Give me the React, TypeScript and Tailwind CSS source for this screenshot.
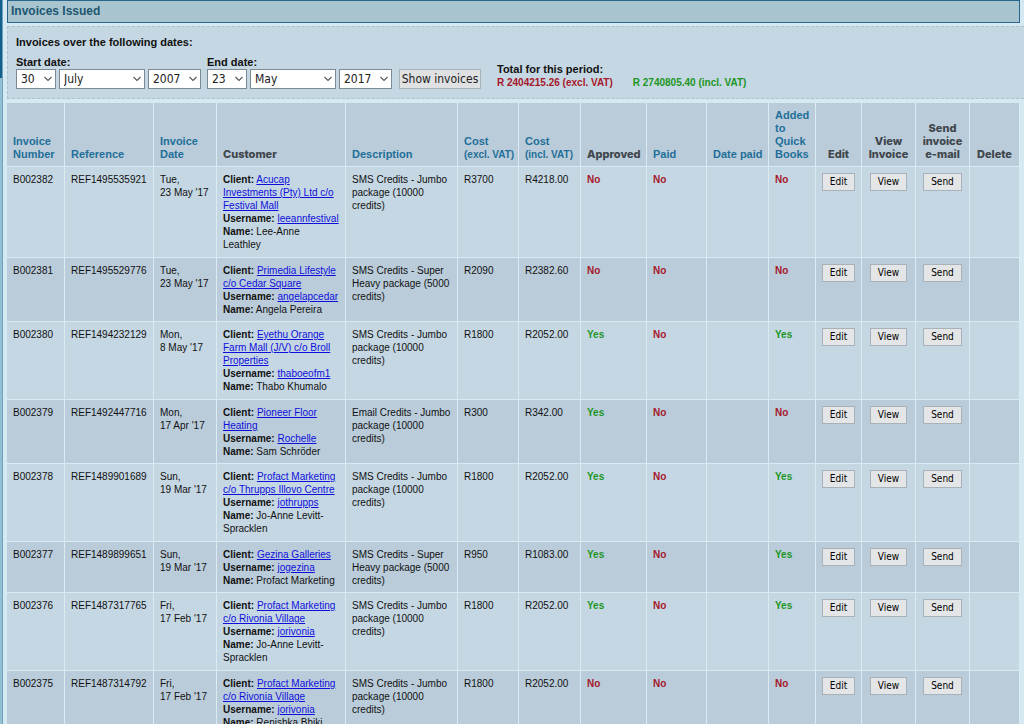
import type { ReactNode } from "react";

type Invoice = {
  number: string;
  reference: string;
  day: string;
  date: string;
  client: string;
  username: string;
  name: string;
  description: string;
  excl: string;
  incl: string;
  approved: boolean;
  paid: boolean;
  quickBooks: boolean;
};

const JUMBO = "SMS Credits - Jumbo package (10000 credits)";
const SUPER = "SMS Credits - Super Heavy package (5000 credits)";

const invoices: Invoice[] = [
  { number: "B002382", reference: "REF1495535921", day: "Tue,", date: "23 May '17", client: "Acucap Investments (Pty) Ltd c/o Festival Mall", username: "leeannfestival", name: "Lee-Anne Leathley", description: JUMBO, excl: "R3700", incl: "R4218.00", approved: false, paid: false, quickBooks: false },
  { number: "B002381", reference: "REF1495529776", day: "Tue,", date: "23 May '17", client: "Primedia Lifestyle c/o Cedar Square", username: "angelapcedar", name: "Angela Pereira", description: SUPER, excl: "R2090", incl: "R2382.60", approved: false, paid: false, quickBooks: false },
  { number: "B002380", reference: "REF1494232129", day: "Mon,", date: "8 May '17", client: "Eyethu Orange Farm Mall (J/V) c/o Broll Properties", username: "thaboeofm1", name: "Thabo Khumalo", description: JUMBO, excl: "R1800", incl: "R2052.00", approved: true, paid: false, quickBooks: true },
  { number: "B002379", reference: "REF1492447716", day: "Mon,", date: "17 Apr '17", client: "Pioneer Floor Heating", username: "Rochelle", name: "Sam Schröder", description: "Email Credits - Jumbo package (10000 credits)", excl: "R300", incl: "R342.00", approved: true, paid: false, quickBooks: false },
  { number: "B002378", reference: "REF1489901689", day: "Sun,", date: "19 Mar '17", client: "Profact Marketing c/o Thrupps Illovo Centre", username: "jothrupps", name: "Jo-Anne Levitt-Spracklen", description: JUMBO, excl: "R1800", incl: "R2052.00", approved: true, paid: false, quickBooks: true },
  { number: "B002377", reference: "REF1489899651", day: "Sun,", date: "19 Mar '17", client: "Gezina Galleries", username: "jogezina", name: "Profact Marketing", description: SUPER, excl: "R950", incl: "R1083.00", approved: true, paid: false, quickBooks: true },
  { number: "B002376", reference: "REF1487317765", day: "Fri,", date: "17 Feb '17", client: "Profact Marketing c/o Rivonia Village", username: "jorivonia", name: "Jo-Anne Levitt-Spracklen", description: JUMBO, excl: "R1800", incl: "R2052.00", approved: true, paid: false, quickBooks: true },
  { number: "B002375", reference: "REF1487314792", day: "Fri,", date: "17 Feb '17", client: "Profact Marketing c/o Rivonia Village", username: "jorivonia", name: "Renishka Bhiki", description: JUMBO, excl: "R1800", incl: "R2052.00", approved: false, paid: false, quickBooks: false },
];

function DateSelect({ label, value, width, id }: { label: string; value: string; width: string; id?: string }) {
  return (
    <span className={`relative block h-5 ${width}`}>
      <select
        id={id}
        aria-label={id ? undefined : label}
        defaultValue={value}
        className="block h-full w-full appearance-none border border-[#7b8a94] bg-white pl-1 font-['DejaVu_Sans_Condensed','DejaVu_Sans',sans-serif] text-[12px] leading-4 text-[#222]"
      >
        <option>{value}</option>
      </select>
      <svg className="pointer-events-none absolute top-1.5 right-1 h-2 w-2" viewBox="0 0 8 8" fill="none" stroke="#555" strokeWidth="1.1">
        <path d="M0.5 2 4 5.5 7.5 2" />
      </svg>
    </span>
  );
}

function SortHead({ children }: { children: ReactNode }) {
  return (
    <th className="border-r border-b border-[#daebf3] px-1.5 pt-1.5 pb-[5px] text-left align-bottom text-[11px] leading-[13px] font-bold text-[#1f6f98]">
      <a href="#sort">{children}</a>
    </th>
  );
}

function PlainHead({ children, center }: { children: ReactNode; center?: boolean }) {
  return (
    <th className={`border-r border-b border-[#daebf3] pt-1.5 pb-[5px] align-bottom font-['Inter','Liberation_Sans',sans-serif] text-[11px] leading-[13px] font-extrabold text-[#40464c] ${center ? "px-0 text-center" : "pl-1.5 text-left"}`}>
      {children}
    </th>
  );
}

function Cell({ children }: { children?: ReactNode }) {
  return <td className="border-r border-b border-[#daebf3] pt-1.5 pr-1.5 pb-[5px] pl-1.5 align-top group-odd:pb-1.5">{children}</td>;
}

function Flag({ on }: { on: boolean }) {
  return <b className={on ? "text-[#1c961f]" : "text-[#a5182c]"}>{on ? "Yes" : "No"}</b>;
}

function ActionCell({ label }: { label: string }) {
  return (
    <td className="border-r border-b border-[#daebf3] pt-1.5 text-center align-top">
      <button type="button" className="h-[18px] border border-[#a9b2b8] bg-[#e4e5e7] px-[7px] font-['DejaVu_Sans_Condensed','DejaVu_Sans',sans-serif] text-[10px] leading-4 text-black">
        {label}
      </button>
    </td>
  );
}

export default function App() {
  return (
    <div className="flex min-h-screen bg-[#d5e9f2] font-['Liberation_Sans',Arial,sans-serif] text-[#111]">
      <div className="flex w-[3px] shrink-0 flex-col border-r border-[#6fa3bd]">
        <div className="h-[78px] bg-[#12608c]" />
        <div className="grow bg-[#93bfd0]" />
      </div>
      <main className="min-w-0 grow pl-1">
        <h1 className="mr-1 border border-[#27658a] bg-[#a8c5cf] pl-[3px] text-[12px] leading-[21px] font-bold text-[#1d566f]">
          Invoices Issued
        </h1>
        <form className="mt-[3px] border border-r-0 border-dashed border-[#adc3cb] bg-[#c5d7e3] pt-[9px] pb-[9px] pl-2 text-[11px] leading-[13px]">
          <p className="font-bold">Invoices over the following dates:</p>
          <div className="mt-[7px] flex items-end">
            <div>
              <label htmlFor="start-day" className="block font-bold">Start date:</label>
              <div className="flex gap-[3px]">
                <DateSelect id="start-day" label="Start day" value="30" width="w-10" />
                <DateSelect label="Start month" value="July" width="w-[86px]" />
                <DateSelect label="Start year" value="2007" width="w-[53px]" />
              </div>
            </div>
            <div className="ml-1.5">
              <label htmlFor="end-day" className="block font-bold">End date:</label>
              <div className="flex gap-[3px]">
                <DateSelect id="end-day" label="End day" value="23" width="w-10" />
                <DateSelect label="End month" value="May" width="w-[86px]" />
                <DateSelect label="End year" value="2017" width="w-[53px]" />
              </div>
            </div>
            <button type="button" className="ml-[7px] h-5 w-[82px] border border-[#a9b2b8] bg-[#dfe1e3] text-center font-['DejaVu_Sans_Condensed','DejaVu_Sans',sans-serif] text-[12px] leading-4 whitespace-nowrap text-[#222]">
              Show invoices
            </button>
            <div className="ml-4 font-bold">
              <p>Total for this period:</p>
              <p className="flex gap-5 text-[10px]">
                <span className="text-[#a5182c]">R 2404215.26 (excl. VAT)</span>
                <span className="text-[#1c961f]">R 2740805.40 (incl. VAT)</span>
              </p>
            </div>
          </div>
        </form>
        <div className="mt-1 mr-1">
          <table className="w-full table-fixed border-separate border-spacing-0 text-[10px] leading-[13px]">
            <colgroup>
              <col className="w-[58px]" />
              <col className="w-[89px]" />
              <col className="w-[63px]" />
              <col className="w-[129px]" />
              <col className="w-[112px]" />
              <col className="w-[61px]" />
              <col className="w-[62px]" />
              <col className="w-[66px]" />
              <col className="w-[60px]" />
              <col className="w-[62px]" />
              <col className="w-[47px]" />
              <col className="w-[46px]" />
              <col className="w-[54px]" />
              <col className="w-[54px]" />
              <col className="w-[50px]" />
            </colgroup>
            <thead>
              <tr className="bg-[#baccda]">
                <SortHead>Invoice Number</SortHead>
                <SortHead>Reference</SortHead>
                <SortHead>Invoice Date</SortHead>
                <PlainHead>Customer</PlainHead>
                <SortHead>Description</SortHead>
                <SortHead>Cost<br /><span className="text-[10px] whitespace-nowrap">(excl. VAT)</span></SortHead>
                <SortHead>Cost<br /><span className="text-[10px] whitespace-nowrap">(incl. VAT)</span></SortHead>
                <PlainHead>Approved</PlainHead>
                <SortHead>Paid</SortHead>
                <SortHead><span className="whitespace-nowrap">Date paid</span></SortHead>
                <SortHead>Added<br />to<br />Quick<br />Books</SortHead>
                <PlainHead center>Edit</PlainHead>
                <PlainHead center>View Invoice</PlainHead>
                <PlainHead center>Send invoice e-mail</PlainHead>
                <PlainHead center>Delete</PlainHead>
              </tr>
            </thead>
            <tbody>
              {invoices.map((inv) => (
                <tr key={inv.number} className="group bg-[#c5d7e3] even:bg-[#baccda]">
                  <Cell>{inv.number}</Cell>
                  <Cell>{inv.reference}</Cell>
                  <Cell>{inv.day}<br /><span className="whitespace-nowrap">{inv.date}</span></Cell>
                  <Cell>
                    <b>Client:</b> <a href="#client" className="text-[#0f0fdc] underline">{inv.client}</a>
                    <br />
                    <b>Username:</b> <a href="#user" className="text-[#0f0fdc] underline">{inv.username}</a>
                    <br />
                    <b>Name:</b> {inv.name}
                  </Cell>
                  <Cell>{inv.description}</Cell>
                  <Cell>{inv.excl}</Cell>
                  <Cell>{inv.incl}</Cell>
                  <Cell><Flag on={inv.approved} /></Cell>
                  <Cell><Flag on={inv.paid} /></Cell>
                  <Cell />
                  <Cell><Flag on={inv.quickBooks} /></Cell>
                  <ActionCell label="Edit" />
                  <ActionCell label="View" />
                  <ActionCell label="Send" />
                  <Cell />
                </tr>
              ))}
            </tbody>
          </table>
        </div>
      </main>
    </div>
  );
}
